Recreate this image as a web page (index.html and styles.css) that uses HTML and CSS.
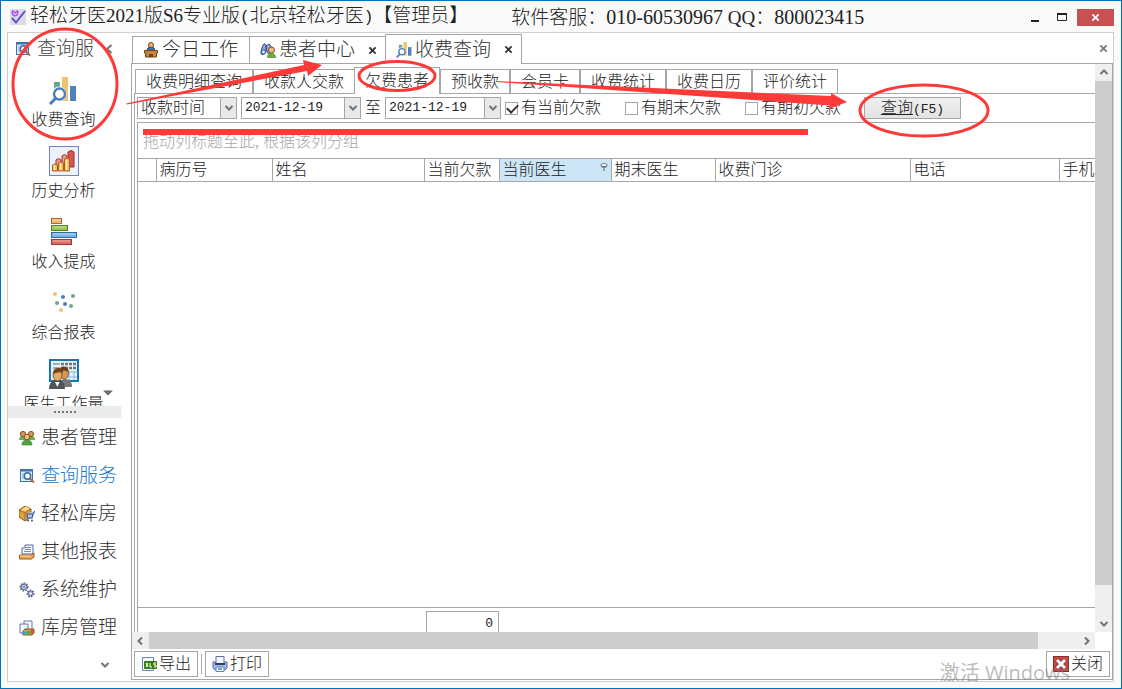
FILE: index.html
```html
<!DOCTYPE html>
<html lang="zh-CN">
<head>
    <meta charset="UTF-8">
    <meta name="viewport" content="width=device-width, initial-scale=1.0">
    <title>轻松牙医2021版S6专业版</title>
    <link rel="stylesheet" href="styles.css">
</head>
<body>
    <!-- shared icons -->
    <svg class="defs" width="0" height="0">
        <symbol id="i-chart" viewBox="0 0 28 28">
            <rect x="5" y="5" width="6" height="10" fill="#6fa58f"/>
            <rect x="13" y="0" width="6" height="24" fill="#efc470"/>
            <rect x="21" y="9" width="6" height="15" fill="#4d82bd"/>
            <circle cx="10" cy="17" r="7.500" fill="#fff"/>
            <circle cx="10.500" cy="17" r="5.500" fill="#fff" stroke="#4a7eb8" stroke-width="2.400"/>
            <path d="M6.500 21.500L1 27" stroke="#4a7eb8" stroke-width="3"/>
        </symbol>
        <symbol id="i-query" viewBox="0 0 16 16">
            <rect x="1.500" y="1.500" width="12" height="12" fill="#dcecf8" stroke="#3e74ad"/>
            <path d="M1 2.500h13" stroke="#3e74ad" stroke-width="2"/>
            <path d="M3 6h2M3 8h2M3 10h2" stroke="#83add3"/>
            <circle cx="8.500" cy="8" r="3.200" fill="#fff" stroke="#386da4" stroke-width="1.500"/>
            <path d="M11 10.500l4 4" stroke="#a96b3b" stroke-width="2"/>
        </symbol>
        <symbol id="i-down" viewBox="0 0 10 8"><path d="M1.500 2l3.500 3.500L8.500 2" fill="none" stroke="#737373" stroke-width="2"/></symbol>
        <symbol id="i-x" viewBox="0 0 10 10"><path d="M1.500 1.500l7 7M8.500 1.500l-7 7" stroke="currentColor" stroke-width="2"/></symbol>
    </svg>

    <div class="window">
        <header class="titlebar">
            <svg class="logo" viewBox="0 0 16 16">
                <rect width="16" height="16" fill="#dddce5"/>
                <path d="M2 3l1-1 2 2 2-2 1 1-1 3-2 1-2-1z" fill="none" stroke="#b352e8" stroke-width="1.500"/>
                <path d="M2 9l4 4.500L15 2" fill="none" stroke="#664bd3" stroke-width="2"/>
            </svg>
            <h1>轻松牙医2021版S6专业版<span class="paren">(</span>北京轻松牙医<span class="paren">)</span>【管理员】</h1>
            <p class="service">软件客服：<span class="phone">010-60530967</span> QQ：<span class="phone">800023415</span></p>
            <div class="win-buttons">
                <button class="win-min" aria-label="最小化"><svg viewBox="0 0 8 10"><path d="M0 9h8" stroke="#222" stroke-width="2"/></svg></button>
                <button class="win-max" aria-label="最大化"><svg viewBox="0 0 10 8"><path d="M.5 0v7.500h9V0" fill="none" stroke="#222"/><path d="M0 1h10" stroke="#222" stroke-width="2"/></svg></button>
                <button class="win-close" aria-label="关闭窗口"><svg viewBox="0 0 10 10"><use href="#i-x"/></svg></button>
            </div>
        </header>

        <div class="frame">
            <aside class="sidebar">
                <div class="side-head">
                    <svg class="icon16" viewBox="0 0 16 16"><use href="#i-query"/></svg>
                    <h2>查询服</h2>
                    <button class="collapse" aria-label="折叠"><svg viewBox="0 0 8 10"><path d="M6.500 1L2 5l4.500 4" fill="none" stroke="#737373" stroke-width="2"/></svg></button>
                </div>
                <div class="shortcuts">
                    <button class="shortcut">
                        <svg viewBox="0 0 30 30"><use href="#i-chart" x="0" y="2" width="28" height="28"/></svg>
                        收费查询
                    </button>
                    <button class="shortcut">
                        <svg viewBox="0 0 30 30">
                            <rect x=".5" y=".5" width="29" height="29" fill="#eef1f9" stroke="#7287b8"/>
                            <g stroke="#9c2d2b"><path d="M7 14q2.500-3 5 0v9H7zM13 10q2.500-3 5 0v13h-5z" fill="#e59c92"/><path d="M19 6q3-3 6 0v15h-6z" fill="#d4564e"/></g>
                            <g stroke="#b35b17"><path d="M3.500 19q2.500-2 5 0v6h-5zM9.500 17q2.500-2 5 0v8h-5zM15.500 13q2.500-2 5 0v12h-5z" fill="#f8b55e"/></g>
                            <path d="M5.500 19v5M11.500 17v7M17.500 14v10" stroke="#fff0b8" stroke-width="1.500"/>
                        </svg>
                        历史分析
                    </button>
                    <button class="shortcut">
                        <svg viewBox="0 0 30 30">
                            <rect x="2.500" y="1.500" width="10" height="5" fill="#efb572" stroke="#a96931"/>
                            <rect x="2.500" y="8.500" width="16" height="5" fill="#9cc651" stroke="#55812b"/>
                            <rect x="2.500" y="15.500" width="25" height="5" fill="#76b5e6" stroke="#3468a5"/>
                            <rect x="2.500" y="22.500" width="20" height="5" fill="#dd6d61" stroke="#9d3735"/>
                            <path d="M4 3h7M4 10h13M4 17h22M4 24h17" stroke="#fff" stroke-opacity=".5"/>
                        </svg>
                        收入提成
                    </button>
                    <button class="shortcut">
                        <svg viewBox="0 0 30 30">
                            <g fill="#efc470"><circle cx="6" cy="6" r="2"/><circle cx="12" cy="22" r="2"/></g>
                            <g fill="#4d7fb9"><circle cx="14" cy="9" r="2"/><circle cx="16" cy="16" r="2"/></g>
                            <g fill="#6fa58f"><circle cx="24" cy="8" r="2"/><circle cx="8" cy="15" r="2"/><circle cx="22" cy="18" r="2"/></g>
                        </svg>
                        综合报表
                    </button>
                    <button class="shortcut">
                        <svg viewBox="0 0 30 30">
                            <rect x="1" y="1" width="28" height="21" fill="#e5f4fb" stroke="#1677ae" stroke-width="2"/>
                            <path d="M4 5h7M4 9h7" stroke="#666"/>
                            <path d="M12 5h16M12 9h16" stroke="#777" stroke-width="2.500" stroke-dasharray="3 1"/>
                            <path d="M17 13h11M17 18h11M20 12v9M25 12v9" stroke="#8bb8d0"/>
                            <path d="M12 28q-1-8 4-8 7 0 7 8z" fill="#777"/>
                            <path d="M0 30q0-9 8-9t8 9z" fill="#505357"/>
                            <ellipse cx="15" cy="14" rx="4.500" ry="6" fill="#d79a52" stroke="#5a3514" stroke-width=".7"/>
                            <path d="M10 13q0-6 6-5 4 1 3 5-3-3-9 0" fill="#6e3f15"/>
                            <ellipse cx="8.500" cy="16" rx="4.500" ry="6" fill="#e3aa65" stroke="#5a3514" stroke-width=".7"/>
                            <path d="M4 15q0-6 5-6t5 5q-5-2-10 1" fill="#754318"/>
                            <path d="M6 23l2.500 5 2-5z" fill="#fff"/>
                        </svg>
                        医生工作量
                    </button>
                    <svg class="more" viewBox="0 0 10 6"><path d="M0 .5h10L5 5.500z" fill="#6b6b6b"/></svg>
                </div>
                <div class="splitter"></div>
                <nav class="groups">
                    <a href="#"><svg class="icon16" viewBox="0 0 16 16">
                        <path d="M0 10q0-4 3.500-4T7 10zM9 10q0-4 3.500-4T16 10z" fill="#6fae55"/><path d="M3 15q0-5 5-5t5 5z" fill="#52a443" stroke="#367c2e" stroke-width=".6"/>
                        <circle cx="4" cy="4" r="2.600" fill="#d59a59" stroke="#845024"/><circle cx="12" cy="4" r="2.600" fill="#d59a59" stroke="#845024"/><circle cx="8" cy="7" r="2.800" fill="#efc281" stroke="#845024"/></svg>患者管理</a>
                    <a href="#" class="current"><svg class="icon16" viewBox="0 0 16 16"><use href="#i-query"/></svg>查询服务</a>
                    <a href="#"><svg class="icon16" viewBox="0 0 16 16">
                        <path d="M0 4l6-4 6 3v8l-6 4-6-4z" fill="#dda044" stroke="#8d5b20"/><path d="M0 4l6 3 6-4M6 7v8" fill="none" stroke="#8d5b20" stroke-width=".7"/><path d="M2 3.500l5-3 4 2-5 3z" fill="#f8d684"/>
                        <path d="M7 8h7l2-3M8 9l1 3h4l1-4" fill="#b9cff4" stroke="#31548f" stroke-width="1.200"/><circle cx="9" cy="14.500" r="1" fill="#31548f"/><circle cx="13" cy="14.500" r="1" fill="#31548f"/></svg>轻松库房</a>
                    <a href="#"><svg class="icon16" viewBox="0 0 16 16">
                        <path d="M6 1h8v9H3V4h3z" fill="#f5f7fb" stroke="#536aa0"/><path d="M7 3.500h5M6 5.500h6M5 7.500h7" stroke="#7d8ead"/><path d="M.5 11h12l2.500-2v4l-2.500 2H.5z" fill="#efa64e" stroke="#9c5620"/><path d="M1 12h11" stroke="#ffe1aa"/></svg>其他报表</a>
                    <a href="#"><svg class="icon16" viewBox="0 0 16 16">
                        <circle cx="5" cy="5" r="3.500" fill="#d7dced" stroke="#59678d" stroke-width="2" stroke-dasharray="1.600 1"/><circle cx="5" cy="5" r="2.500" fill="#edf0f9" stroke="#59678d"/><circle cx="5" cy="5" r="1" fill="#59678d"/>
                        <circle cx="11.500" cy="11.500" r="3" fill="#d7dced" stroke="#59678d" stroke-width="2" stroke-dasharray="1.600 1"/><circle cx="11.500" cy="11.500" r="2" fill="#edf0f9" stroke="#59678d"/></svg>系统维护</a>
                    <a href="#"><svg class="icon16" viewBox="0 0 16 16">
                        <path d="M5 1h8v11H5z" fill="#fff" stroke="#5c76ac"/><path d="M1 4h8v9H1z" fill="#f2f6fd" stroke="#5c76ac"/><path d="M4 11l2-2h9v4l-2 2H4z" fill="#d6a134" stroke="#815825"/><path d="M4.500 11.500h3.500v3H4.500z" fill="#3fa5df"/><path d="M8 11h3.500v3.500H8z" fill="#5faa36"/><path d="M12 9.500h3v3l-3 2z" fill="#d94e35"/></svg>库房管理</a>
                </nav>
                <button class="groups-more" aria-label="更多"><svg viewBox="0 0 10 8"><use href="#i-down"/></svg></button>
            </aside>

            <main class="main">
                <div class="doc-tabs">
                    <button class="doc-tab"><svg class="icon16" viewBox="0 0 16 16">
                        <path d="M4 9q0-4 4-4t4 4z" fill="#4671b0" stroke="#30446c"/><circle cx="8" cy="3" r="2.500" fill="#efb66f" stroke="#6a431e"/><path d="M1.500 8.500h13V11h-1v4h-11v-4h-1z" fill="#c9853d" stroke="#6f421a"/><path d="M6 12h4v3H6z" fill="#6f421a"/></svg>今日工作</button>
                    <button class="doc-tab">
                        <svg class="icon16" viewBox="0 0 16 16"><path d="M1 9l2-6q2-3 3 0v7q-2 4-5 2zM6 4l3-2 2 2 1 7q-3 3-5-1z" fill="#8da8d8" stroke="#344f87"/><circle cx="3.500" cy="10" r="2" fill="#e6f1ff" stroke="#344f87"/><path d="M7 16q0-5 4.500-5t4.500 5z" fill="#69ab43"/><circle cx="11.500" cy="8" r="3" fill="#efbd80" stroke="#825020"/></svg>患者中心
                        <svg class="tab-x" viewBox="0 0 10 10"><use href="#i-x"/></svg>
                    </button>
                    <button class="doc-tab active"><svg class="icon16" viewBox="0 0 28 28"><use href="#i-chart"/></svg>收费查询
                        <svg class="tab-x" viewBox="0 0 10 10"><use href="#i-x"/></svg>
                    </button>
                    <button class="close-all" aria-label="关闭页签"><svg class="tab-x" viewBox="0 0 10 10"><use href="#i-x"/></svg></button>
                </div>

                <section class="page">
                    <div class="viewport">
                        <div class="content">
                            <div class="sub-tabs">
                                <button class="sub-tab">收费明细查询</button>
                                <button class="sub-tab">收款人交款</button>
                                <button class="sub-tab active">欠费患者</button>
                                <button class="sub-tab">预收款</button>
                                <button class="sub-tab">会员卡</button>
                                <button class="sub-tab">收费统计</button>
                                <button class="sub-tab">收费日历</button>
                                <button class="sub-tab">评价统计</button>
                            </div>
                            <div class="tab-page">
                                <form class="filters">
                                    <span class="combo field-kind">
                                        <select aria-label="时间类型"><option>收款时间</option></select>
                                        <span class="drop"><svg viewBox="0 0 10 8"><use href="#i-down"/></svg></span>
                                    </span>
                                    <span class="combo field-from">
                                        <input type="text" aria-label="开始日期" value="2021-12-19">
                                        <span class="drop"><svg viewBox="0 0 10 8"><use href="#i-down"/></svg></span>
                                    </span>
                                    <label for="date-to">至</label>
                                    <span class="combo field-to">
                                        <input type="text" id="date-to" value="2021-12-19">
                                        <span class="drop"><svg viewBox="0 0 10 8"><use href="#i-down"/></svg></span>
                                    </span>
                                    <div class="checks">
                                        <label><input type="checkbox" checked>有当前欠款</label>
                                        <label><input type="checkbox">有期末欠款</label>
                                        <label><input type="checkbox">有期初欠款</label>
                                    </div>
                                    <button type="button" class="query"><u>查询</u><span class="latin">(F5)</span></button>
                                </form>
                                <div class="grid">
                                    <div class="group-panel">拖动列标题至此, 根据该列分组</div>
                                    <table class="cols">
                                        <colgroup><col class="c-mark"><col class="c-no"><col class="c-name"><col class="c-owe"><col class="c-doc"><col class="c-end"><col class="c-clinic"><col class="c-tel"><col class="c-mobile"></colgroup>
                                        <thead>
                                            <tr>
                                                <th></th>
                                                <th>病历号</th>
                                                <th>姓名</th>
                                                <th>当前欠款</th>
                                                <th class="sorted"><span>当前医生<svg viewBox="0 0 8 8"><ellipse cx="4" cy="2" rx="3.300" ry="1.500" fill="#fff" stroke="#6f7d88"/><path d="M1 3l3 2 3-2M4 4v4" fill="none" stroke="#6f7d88" stroke-width="1.300"/></svg></span></th>
                                                <th>期末医生</th>
                                                <th>收费门诊</th>
                                                <th>电话</th>
                                                <th>手机</th>
                                            </tr>
                                        </thead>
                                    </table>
                                    <div class="rows"></div>
                                    <div class="summary"><output class="latin">0</output></div>
                                </div>
                            </div>
                        </div>
                        <div class="vscroll">
                            <svg viewBox="0 0 10 8"><path d="M1.500 6L5 2.500 8.500 6" fill="none" stroke="#737373" stroke-width="2"/></svg>
                            <div class="vthumb"></div>
                            <svg viewBox="0 0 10 8"><use href="#i-down"/></svg>
                        </div>
                    </div>
                    <div class="hscroll">
                        <svg viewBox="0 0 8 10"><path d="M6 1.500L2.500 5 6 8.500" fill="none" stroke="#737373" stroke-width="2"/></svg>
                        <div class="hthumb"></div>
                        <svg viewBox="0 0 8 10"><path d="M2 1.500L5.500 5 2 8.500" fill="none" stroke="#737373" stroke-width="2"/></svg>
                    </div>
                    <footer class="actions">
                        <button><svg class="icon16" viewBox="0 0 16 16"><path d="M1.500 1.500h11v13h-11z" fill="#f5f9ff" stroke="#6e86bd"/><rect x="3" y="5" width="13" height="8" rx="1" fill="#328012"/><path d="M5 7l2 4M7 7l-2 4M9 7v4h2M15 7h-2v2h2v2h-2" fill="none" stroke="#fff"/></svg>导出</button>
                        <span class="sep"></span>
                        <button><svg class="icon16" viewBox="0 0 16 16"><path d="M1 6h14v6l-2 2H3l-2-2z" fill="#a8b9e4" stroke="#5269a8"/><path d="M4 .5h8V8H4z" fill="#f3f7ff" stroke="#5b70a9"/><path d="M3 7h10v2H3z" fill="#273d75"/><path d="M4 11h8v4.500H4z" fill="#edf7ff" stroke="#6c80b5"/><path d="M6 12h4v2H6z" fill="#57ade4"/></svg>打印</button>
                        <button class="exit"><svg class="icon16" viewBox="0 0 16 16"><rect x=".5" y=".5" width="15" height="15" fill="#ca4640" stroke="#8d2e2e"/><path d="M4 4l8 8M12 4l-8 8" stroke="#8e3a42" stroke-width="5"/><path d="M4 4l8 8M12 4l-8 8" stroke="#fff" stroke-width="3"/></svg>关闭</button>
                    </footer>
                </section>
            </main>
        </div>

        <p class="watermark">激活 Windows</p>
        <!-- red guide marks over the window -->
        <svg class="marks" width="1122" height="689" viewBox="0 0 1122 689">
            <g fill="none" stroke="#fd3a38" stroke-width="3">
                <ellipse cx="65" cy="84" rx="52" ry="55"/>
                <ellipse cx="397" cy="76" rx="38" ry="14.500"/>
                <ellipse cx="924" cy="110.500" rx="64" ry="25.500"/>
            </g>
            <g fill="#fd3a38">
                <path d="M126 103.500L304 65l-1-5 19 5-14 11-1-5L127 104.500z"/>
                <path d="M496 81L831 96V93l16 9-18 7 1-3.500L496 82z"/>
                <rect x="143" y="129" width="665" height="6"/>
            </g>
        </svg>
    </div>
</body>
</html>
```
FILE: styles.css
```css
* {
    box-sizing: border-box;
}
body {
    margin: 0;
    font-family: "Liberation Serif", "Noto Sans CJK SC", sans-serif;
    font-size: 16px;
    font-weight: 300;
    line-height: 20px;
    color: #222;
}
h1, h2, p {
    margin: 0;
    font-size: 19px;
    font-weight: 300;
}
button, input, select {
    font: inherit;
    color: inherit;
}
button {
    padding: 0;
    border: 0;
    background: none;
    cursor: pointer;
}
svg {
    display: block;
    flex: none;
}
.defs {
    position: absolute;
}
.icon16 {
    width: 16px;
    height: 16px;
}
.latin {
    font-family: "Liberation Mono", monospace;
    font-size: 13px;
}

.window {
    position: relative;
    display: flex;
    flex-direction: column;
    height: 100vh;
    overflow: hidden;
    padding: 0 7px 6px 6px;
    border: 1px solid #0071bf;
    background: #fafafa;
}

/* title bar */
.titlebar {
    display: flex;
    align-items: center;
    height: 31px;
    padding: 1px 0 0 3px;
    white-space: nowrap;
}
.logo {
    width: 16px;
    height: 16px;
    margin-right: 4px;
}
.paren {
    font-family: "Liberation Mono", monospace;
    font-size: 16px;
}
.service {
    margin-left: 43px;
}
.phone {
    font-size: 20px;
}
.win-buttons {
    display: flex;
    align-items: center;
    gap: 18px;
    margin-left: auto;
}
.win-min svg {
    width: 8px;
    height: 10px;
}
.win-max svg {
    width: 10px;
    height: 8px;
}
.win-close {
    display: flex;
    align-items: center;
    justify-content: center;
    width: 37px;
    height: 17px;
    margin-left: -8px;
    background: #c75050;
    color: #fff;
}
.win-close svg {
    width: 9px;
    height: 9px;
}

.frame {
    display: flex;
    flex: 1;
    min-height: 0;
    border: 1px solid #d0d0d0;
    background: #fff;
}

/* left bar */
.sidebar {
    display: flex;
    flex-direction: column;
    width: 113px;
    margin-right: 10px;
}
.side-head {
    display: flex;
    align-items: center;
    gap: 6px;
    height: 31px;
    padding-left: 7px;
}
.side-head h2 {
    color: #444;
}
.collapse svg {
    width: 8px;
    height: 10px;
    margin-left: 5px;
}
.shortcuts {
    position: relative;
    display: flex;
    flex-direction: column;
    gap: 11px;
    height: 342px;
    padding: 11px 2px 0 0;
    overflow: hidden;
}
.shortcut {
    display: flex;
    flex: none;
    flex-direction: column;
    align-items: center;
    gap: 5px;
    height: 60px;
    white-space: nowrap;
}
.shortcut svg {
    width: 30px;
    height: 30px;
}
.more {
    position: absolute;
    right: 8px;
    bottom: 10px;
    width: 10px;
    height: 6px;
}
.splitter {
    display: flex;
    align-items: center;
    justify-content: center;
    height: 12px;
    background: #ebebeb;
}
.splitter::before {
    content: "";
    width: 22px;
    border-top: 2px dotted #777;
}
.groups {
    display: flex;
    flex-direction: column;
    padding-top: 1px;
}
.groups a {
    display: flex;
    align-items: center;
    gap: 6px;
    height: 38px;
    padding-left: 11px;
    color: #333;
    font-size: 19px;
    text-decoration: none;
    white-space: nowrap;
}
.groups .current {
    color: #1979ca;
}
.groups-more {
    align-self: flex-end;
    margin: 14px 11px 0 0;
}
.groups-more svg {
    width: 10px;
    height: 8px;
}

/* document tabs */
.main {
    display: flex;
    flex: 1;
    flex-direction: column;
    min-width: 0;
}
.doc-tabs {
    display: flex;
    align-items: flex-end;
    height: 30px;
    padding-left: 1px;
}
.doc-tab {
    display: flex;
    align-items: center;
    gap: 3px;
    height: 27px;
    padding: 0 11px 0 10px;
    margin-right: -1px;
    border: 1px solid #a6a6a6;
    border-bottom: 0;
    color: #333;
    font-size: 19px;
    white-space: nowrap;
}
.doc-tab .tab-x {
    margin-left: 10px;
}
.doc-tab:has(.tab-x) {
    padding-right: 8px;
}
.doc-tab.active {
    z-index: 1;
    height: 30px;
    margin-bottom: -1px;
    background: #fff;
}
.tab-x {
    width: 9px;
    height: 9px;
}
.close-all {
    align-self: center;
    margin: 0 5px 0 auto;
    color: #777;
}
.page {
    display: flex;
    flex: 1;
    flex-direction: column;
    min-height: 0;
    margin-bottom: 1px;
    border: 1px solid #a6a6a6;
}
.viewport {
    display: flex;
    flex: 1;
    min-height: 0;
}
.content {
    display: flex;
    flex: 1;
    flex-direction: column;
    min-width: 0;
    overflow: hidden;
    padding: 3px 0 0 2px;
}

/* inner tabs */
.sub-tabs {
    display: flex;
    align-items: flex-end;
    height: 26px;
    padding-left: 1px;
}
.sub-tab {
    height: 24px;
    padding: 0 10px;
    margin-left: -1px;
    border: 1px solid #a6a6a6;
    border-width: 1px 1px 0 2px;
    white-space: nowrap;
}
.sub-tab:first-child {
    margin-left: 0;
    border-left-width: 1px;
}
.sub-tab.active {
    z-index: 1;
    height: 27px;
    margin-bottom: -1px;
    border-left-width: 1px;
    background: #fff;
}
.tab-page {
    display: flex;
    flex: 1;
    flex-direction: column;
    min-height: 0;
    padding-left: 2px;
    border: 1px solid #a6a6a6;
    border-width: 1px 0 0 1px;
}

/* filter row */
.filters {
    display: flex;
    align-items: center;
    gap: 4px;
    height: 28px;
    white-space: nowrap;
}
.combo {
    display: flex;
    height: 22px;
    border: 1px solid #a6a6a6;
}
.combo select,
.combo input {
    flex: 1;
    min-width: 0;
    padding: 0 3px;
    border: 0;
    background: #fff;
    appearance: none;
}
.combo input {
    font-family: "Liberation Mono", monospace;
    font-size: 13px;
}
.field-kind {
    width: 100px;
}
.field-from {
    width: 120px;
}
.field-to {
    width: 116px;
}
.drop {
    display: flex;
    align-items: center;
    justify-content: center;
    width: 16px;
    border-left: 1px solid #a6a6a6;
    background: #e9e9e9;
}
.drop svg {
    width: 10px;
    height: 8px;
}
.checks {
    display: flex;
    gap: 24px;
}
.checks label {
    display: flex;
    align-items: center;
    gap: 3px;
}
.checks input {
    width: 13px;
    height: 13px;
    margin: 0;
    border: 1px solid #a6a6a6;
    background: #fff;
    appearance: none;
}
.checks input:checked::before {
    content: "";
    display: block;
    width: 9px;
    height: 5px;
    margin: 1px;
    border: solid #333;
    border-width: 0 0 2px 2px;
    transform: rotate(-45deg);
}
.query {
    width: 97px;
    height: 22px;
    margin-left: 19px;
    border: 1px solid #a6a6a6;
    background: linear-gradient(#f0f0f0, #e2e2e2);
}

/* grid */
.grid {
    display: flex;
    flex: 1;
    flex-direction: column;
    min-height: 0;
    border: 1px solid #a6a6a6;
    border-width: 1px 0 0 1px;
}
.group-panel {
    height: 35px;
    padding: 9px 5px 0;
    color: #a6a6a6;
}
.cols {
    width: 1100px;
    table-layout: fixed;
    border-collapse: collapse;
}
.cols th {
    height: 23px;
    padding: 0 3px;
    border: 1px solid #a6a6a6;
    border-left: 0;
    font-weight: 300;
    text-align: left;
    white-space: nowrap;
}
.cols .sorted {
    background: #cde6f7;
}
.sorted span {
    display: flex;
    justify-content: space-between;
}
.sorted svg {
    width: 8px;
    height: 8px;
    margin-top: 3px;
}
.c-mark { width: 18px; }
.c-no { width: 116px; }
.c-name { width: 152px; }
.c-owe { width: 75px; }
.c-doc { width: 112px; }
.c-end { width: 104px; }
.c-clinic { width: 195px; }
.c-tel { width: 149px; }
.rows {
    flex: 1;
}
.summary {
    height: 25px;
    padding: 3px 0 0 288px;
    border-top: 1px solid #a6a6a6;
}
.summary output {
    display: block;
    width: 73px;
    height: 21px;
    padding: 2px 5px;
    border: 1px solid #a6a6a6;
    border-bottom: 0;
    text-align: right;
}

/* scroll bars */
.vscroll,
.hscroll {
    display: flex;
    align-items: center;
    background: #efefef;
}
.vscroll {
    flex-direction: column;
    width: 17px;
    padding: 4px 0;
}
.vscroll svg {
    width: 10px;
    height: 8px;
}
.vthumb {
    flex: 1;
    width: 17px;
    margin: 5px 0 35px;
    background: #cdcdcd;
}
.hscroll {
    height: 17px;
    margin-right: 17px;
    padding: 0 4px;
}
.hscroll svg {
    width: 8px;
    height: 10px;
}
.hthumb {
    flex: 1;
    height: 17px;
    margin: 0 45px 0 5px;
    background: #cdcdcd;
}

/* bottom buttons */
.actions {
    display: flex;
    align-items: center;
    gap: 3px;
    height: 30px;
    padding: 0 2px;
}
.actions button {
    display: flex;
    align-items: center;
    gap: 2px;
    height: 26px;
    padding: 0 6px;
    border: 1px solid #a6a6a6;
    background: #fff;
}
.sep {
    height: 20px;
    border-left: 1px solid #b0b0b0;
}
.actions .exit {
    margin-left: auto;
}

.watermark {
    position: absolute;
    z-index: 2;
    right: 51px;
    bottom: 5px;
    color: rgba(130, 130, 130, 0.55);
    font-family: "Open Sans", "Noto Sans CJK SC", sans-serif;
    font-size: 20px;
    font-weight: 400;
}
.marks {
    position: absolute;
    z-index: 2;
    top: -1px;
    left: -1px;
    pointer-events: none;
}
```
